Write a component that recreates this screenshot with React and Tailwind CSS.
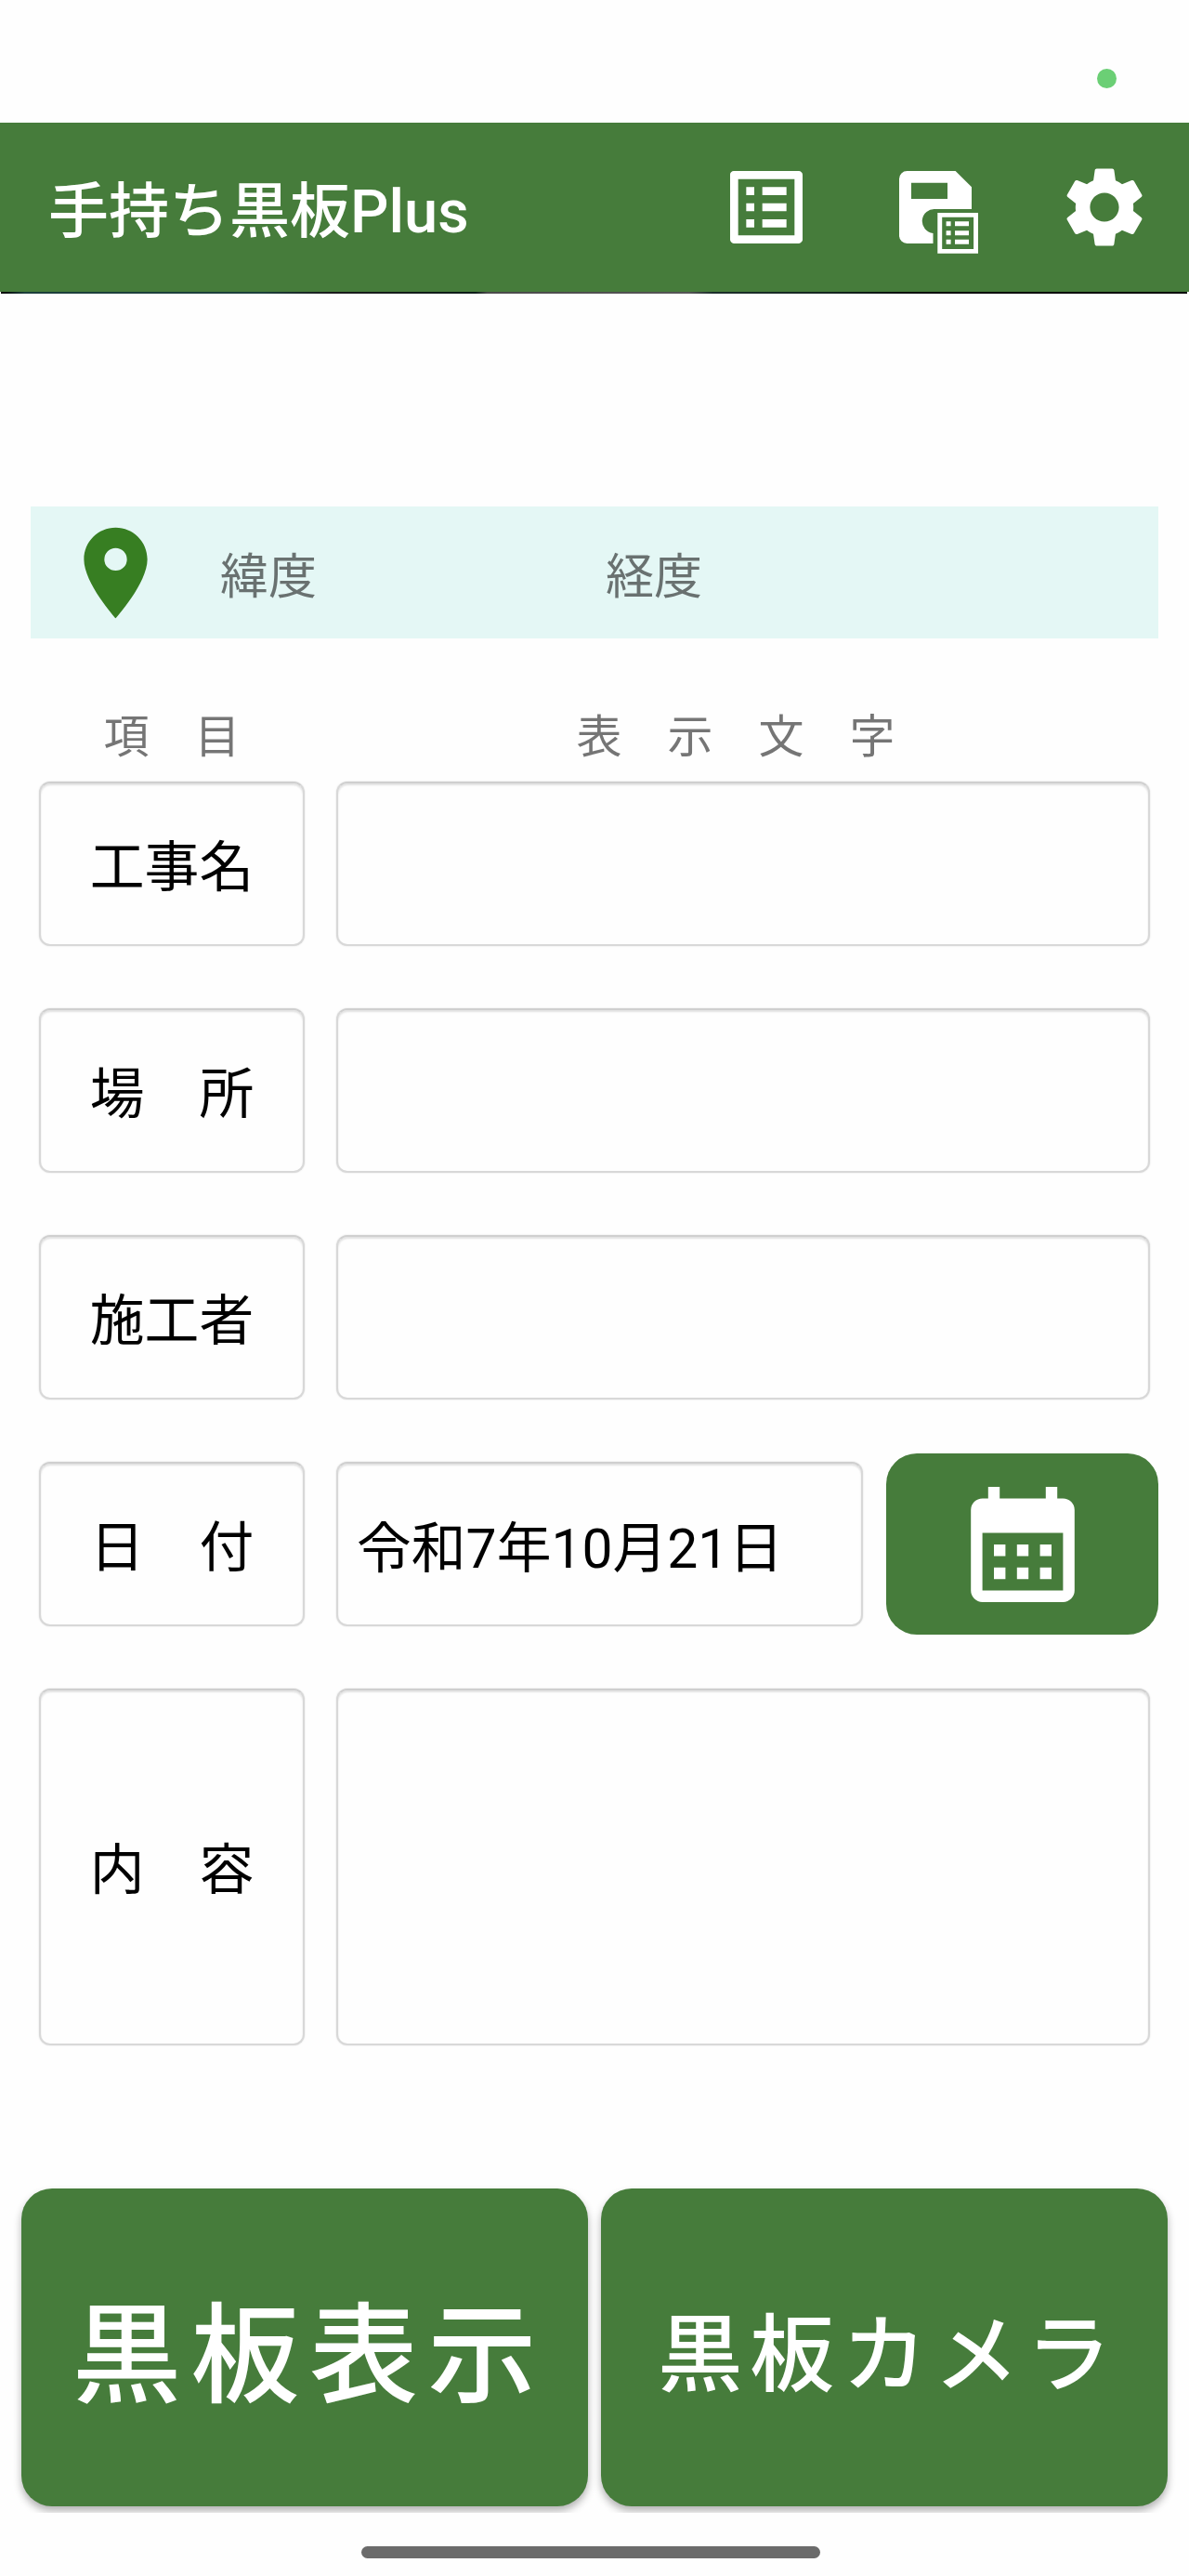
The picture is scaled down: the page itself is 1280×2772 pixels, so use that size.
import { useState } from 'react';
import { MdListAlt, MdLocationOn, MdSettings } from 'react-icons/md';

const rows = [
    { key: 'name', label: '工事名' },
    { key: 'place', label: '場　所' },
    { key: 'builder', label: '施工者' },
    { key: 'date', label: '日　付' },
    { key: 'content', label: '内　容' },
];

function SaveListIcon() {
    return (
        <svg viewBox="0 0 104 104" className="w-[104px] h-[104px]" fill="currentColor">
            <path
                fillRule="evenodd"
                d="M21.5 13H73.6L91 30.3V54H52a13 13 0 0 0-2.5 25.9V91H21.5A8.5 8.5 0 0 1 13 82.5V21.5A8.5 8.5 0 0 1 21.5 13zM26 25.8V43H65V25.8z"
            />
            <path fillRule="evenodd" d="M54.3 58H98v43.7H54.3zM59.2 62.7v34.2h33.9V62.7z" />
            <path d="M63.6 67.2h5v5h-5zM63.6 77.2h5v5h-5zM63.6 86.8h5v5h-5zM73 67.2h15v5H73zM73 77.2h15v5H73zM73 86.8h15v5H73z" />
        </svg>
    );
}

function CalendarIcon() {
    return (
        <svg viewBox="0 0 18 20" className="w-[112px] h-[124px]" fill="currentColor">
            <path
                fillRule="evenodd"
                d="M3 0h2v2h8V0h2v2h1a2 2 0 0 1 2 2v14a2 2 0 0 1-2 2H2a2 2 0 0 1-2-2V4a2 2 0 0 1 2-2h1zM2 8v10h14V8z"
            />
            <path d="M4 10h2v2H4zM8 10h2v2H8zM12 10h2v2h-2zM4 14h2v2H4zM8 14h2v2H8zM12 14h2v2h-2z" />
        </svg>
    );
}

const boxStyle =
    "block min-w-0 rounded-[12px] border-2 border-[#d8d8d8] border-t-[#cfcfcf] bg-[#fefefe] shadow-[inset_0_2px_2px_#e2e2e2,0_0_2px_#dedede] outline-none text-black text-[58.8px] leading-[84px]";

export default function App() {
    const [values, setValues] = useState({
        name: '',
        place: '',
        builder: '',
        date: '令和7年10月21日',
        content: '',
    });

    const handleChange = (e) => {
        setValues({ ...values, [e.target.name]: e.target.value });
    };

    return (
        <div className="w-[1280px] h-[2772px] bg-[#fefefe] flex flex-col overflow-hidden font-['Roboto','Noto_Sans_CJK_JP',sans-serif]">
            {/* Status bar */}
            <div className="h-[132px] shrink-0 flex justify-end pt-[74px] pr-[78px]">
                <span className="w-[21px] h-[21px] rounded-full bg-[#6bcf75]" />
            </div>

            {/* App bar */}
            <header className="h-[182px] shrink-0 bg-[#467c3b] text-white flex items-center justify-between pl-[52px] pr-[39px]">
                <h1 className="pt-[10px] text-[65px] leading-[96px] font-medium">手持ち黒板Plus</h1>
                <div className="flex gap-[78px]">
                    <button><MdListAlt size={104} /></button>
                    <button><SaveListIcon /></button>
                    <button><MdSettings size={104} /></button>
                </div>
            </header>
            <div className="h-[2px] shrink-0 ml-px mr-[2px] bg-[linear-gradient(to_right,#000_0,#1c3f3b_2%,#1c3f3b_22%,#1a1a1a_28%,#0c1c18_40%,#4a4a4a_41%,#555_58%,#1c2f2b_60%,#14251f_70%,#000_80%)]" />

            {/* Location */}
            <div className="mt-[229px] ml-[33px] mr-[33px] h-[142px] shrink-0 bg-[#e4f7f5] flex items-center text-black/54 text-[52px] leading-[76px]">
                <MdLocationOn size={117} className="ml-[33px] text-[#377e22]" />
                <span className="ml-[54px] w-[415px] pt-[11px]">緯度</span>
                <span className="pt-[11px]">経度</span>
            </div>

            {/* Column headings */}
            <div className="mt-[72px] ml-[33px] mr-[33px] h-[70px] shrink-0 flex text-center text-black/54 text-[49px] leading-[70px]">
                <span className="w-[304px]">項　目</span>
                <span className="flex-1">表　示　文　字</span>
            </div>

            {/* Form */}
            <form className="mt-[12px] pl-[42px] pr-[33px] flex flex-col gap-[67px]">
                {rows.map((row) => (
                    <div
                        key={row.key}
                        className={row.key === 'content' ? 'flex h-[384px]' : 'flex h-[177px] items-center'}
                    >
                        <div className={`${boxStyle} w-[286px] h-full pt-[8px] !flex items-center justify-center`}>
                            {row.label}
                        </div>
                        {row.key === 'content' ? (
                            <textarea
                                name="content"
                                value={values.content}
                                onChange={handleChange}
                                className={`${boxStyle} ml-[34px] mr-[9px] flex-1 h-full resize-none`}
                            />
                        ) : (
                            <input
                                name={row.key}
                                value={values[row.key]}
                                onChange={handleChange}
                                className={`${boxStyle} ml-[34px] flex-1 h-full pl-[20px] ${row.key === 'date' ? 'mr-[25px]' : 'mr-[9px]'}`}
                            />
                        )}
                        {row.key === 'date' && (
                            <button
                                type="button"
                                className="w-[293px] h-[195px] shrink-0 rounded-[33px] bg-[#467c3b] text-white flex items-center justify-center"
                            >
                                <CalendarIcon />
                            </button>
                        )}
                    </div>
                ))}
            </form>

            {/* Actions */}
            <div className="mt-[144px] h-[359px] shrink-0 overflow-hidden pt-[10px] px-[23px] flex gap-[14px] text-white font-medium">
                <button className="w-[610px] h-[342px] pt-[20px] pl-[10px] rounded-[33px] bg-[#467c3b] shadow-[0_5px_8px_rgba(0,0,0,0.3)] text-[117px] leading-[170px] tracking-[0.0893em] whitespace-nowrap">
                    黒板表示
                </button>
                <button className="w-[610px] h-[342px] pt-[17px] pl-[8px] rounded-[33px] bg-[#467c3b] shadow-[0_5px_8px_rgba(0,0,0,0.3)] text-[91px] leading-[132px] tracking-[0.0893em] whitespace-nowrap">
                    黒板カメラ
                </button>
            </div>

            {/* Gesture bar */}
            <div className="mt-[36px] ml-[389px] w-[494px] h-[13px] shrink-0 rounded-full bg-[#6b6b6b]" />
        </div>
    );
}
